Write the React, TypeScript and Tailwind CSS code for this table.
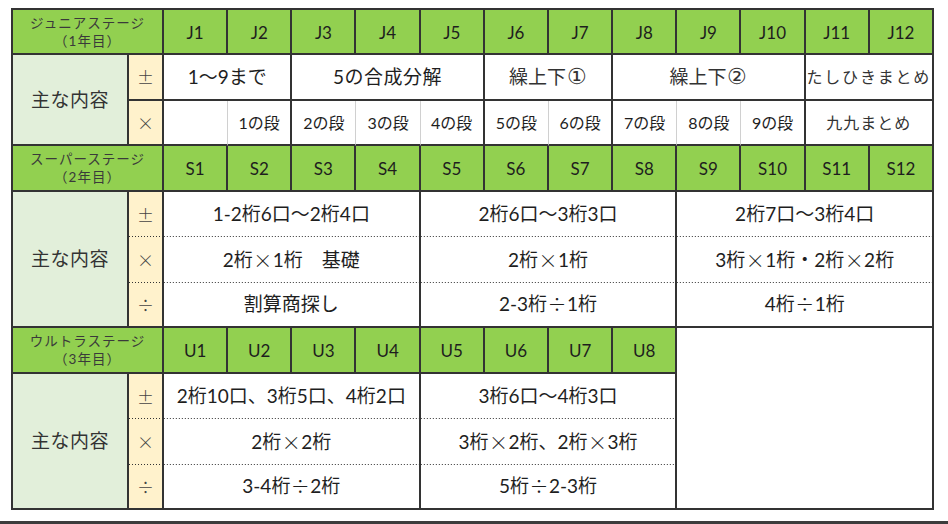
import React from "react";

const DR = "border-r-2 border-r-[#333]";
const LR = "border-r border-r-[#d0d0d0]";
const DB = "border-b-2 border-b-[#333]";
const DOT =
  "bg-[linear-gradient(to_right,#333_1px,transparent_1px)] bg-[length:3px_1px] bg-bottom bg-repeat-x";

function Cell({
  className = "",
  children,
}: {
  className?: string;
  children?: React.ReactNode;
}) {
  return (
    <div
      className={`flex items-center justify-center text-center whitespace-nowrap text-[#1e1e1e] ${className}`}
    >
      {children}
    </div>
  );
}

function Op({ c }: { c: string }) {
  return (
    <span className="inline-block w-[1.05em] text-center font-['Noto_Sans_CJK_JP',sans-serif] font-light">
      {c}
    </span>
  );
}

function Circ({ c }: { c: string }) {
  return <span className="font-['DejaVu_Sans',sans-serif] text-[22px] leading-none font-light ml-[1px]">{c}</span>;
}

function StageHeader({ name, year }: { name: string; year: string }) {
  return (
    <Cell className={`col-span-2 flex-col bg-[#92d050] ${DR} ${DB} text-[13.5px] leading-[18px] tracking-[1px] text-[#3a3a3a]`}>
      <span>{name}</span>
      <span>{year}</span>
    </Cell>
  );
}

function Heads({ prefix, n }: { prefix: string; n: number }) {
  return (
    <>
      {Array.from({ length: n }, (_, i) => (
        <Cell
          key={i}
          className={`bg-[#92d050] ${DR} ${DB} text-[17px] pt-[2px]`}
        >
          {prefix}
          {i + 1}
        </Cell>
      ))}
    </>
  );
}

export default function App() {
  const label = `bg-[#e2efda] ${DR} ${DB} text-[19px] text-[#333] tracking-[0.5px]`;
  const sym = "font-['Noto_Sans_CJK_JP',sans-serif] font-light text-[17px] text-[#444]";
  const symDot = `bg-[#fff2cc] ${DR} ${DOT} ${sym}`;
  const symEnd = `bg-[#fff2cc] ${DR} ${DB} ${sym}`;
  const body = "text-[19px]";
  return (
    <div className="w-[948px] h-[524px] bg-white font-['Lato','Noto_Sans_CJK_JP',sans-serif] flex flex-col">
      <div className="ml-[11px] mt-[8px] w-[923px] h-[502px] grid grid-cols-[116px_35px_repeat(12,minmax(0,1fr))] grid-rows-[repeat(11,minmax(0,1fr))] border-l-2 border-t-2 border-[#333]">
        {/* Junior */}
        <StageHeader name="ジュニアステージ" year="（1年目）" />
        <Heads prefix="J" n={12} />

        <Cell className={`row-span-2 ${label}`}>主な内容</Cell>
        <Cell className={symEnd}>±</Cell>
        <Cell className={`col-span-2 ${DR} ${DB} ${body}`}>1〜9まで</Cell>
        <Cell className={`col-span-3 ${DR} ${DB} ${body} tracking-[0.5px]`}>5の合成分解</Cell>
        <Cell className={`col-span-2 ${DR} ${DB} ${body} text-[#333]`}>
          繰上下<Circ c="①" />
        </Cell>
        <Cell className={`col-span-3 ${DR} ${DB} ${body} text-[#333]`}>
          繰上下<Circ c="②" />
        </Cell>
        <Cell className={`col-span-2 ${DR} ${DB} text-[16px] tracking-[1.8px] text-[#333]`}>たしひきまとめ</Cell>

        <Cell className={symEnd}>×</Cell>
        <Cell className={`${LR} ${DB}`} />
        <Cell className={`${DR} ${DB} text-[16px]`}>1の段</Cell>
        <Cell className={`${LR} ${DB} text-[16px]`}>2の段</Cell>
        <Cell className={`${LR} ${DB} text-[16px]`}>3の段</Cell>
        <Cell className={`${DR} ${DB} text-[16px]`}>4の段</Cell>
        <Cell className={`${LR} ${DB} text-[16px]`}>5の段</Cell>
        <Cell className={`${DR} ${DB} text-[16px]`}>6の段</Cell>
        <Cell className={`${LR} ${DB} text-[16px]`}>7の段</Cell>
        <Cell className={`${LR} ${DB} text-[16px]`}>8の段</Cell>
        <Cell className={`${DR} ${DB} text-[16px]`}>9の段</Cell>
        <Cell className={`col-span-2 ${DR} ${DB} text-[16px] tracking-[1px] text-[#333]`}>九九まとめ</Cell>

        {/* Super */}
        <StageHeader name="スーパーステージ" year="（2年目）" />
        <Heads prefix="S" n={12} />

        <Cell className={`row-span-3 ${label}`}>主な内容</Cell>
        <Cell className={symDot}>±</Cell>
        <Cell className={`col-span-4 ${DR} ${DOT} ${body}`}>1-2桁6口〜2桁4口</Cell>
        <Cell className={`col-span-4 ${DR} ${DOT} ${body}`}>2桁6口〜3桁3口</Cell>
        <Cell className={`col-span-4 ${DR} ${DOT} ${body}`}>2桁7口〜3桁4口</Cell>

        <Cell className={symDot}>×</Cell>
        <Cell className={`col-span-4 ${DR} ${DOT} ${body}`}>
          2桁<Op c="×" />1桁　基礎
        </Cell>
        <Cell className={`col-span-4 ${DR} ${DOT} ${body}`}>
          2桁<Op c="×" />1桁
        </Cell>
        <Cell className={`col-span-4 ${DR} ${DOT} ${body}`}>
          3桁<Op c="×" />1桁・2桁<Op c="×" />2桁
        </Cell>

        <Cell className={symEnd}>÷</Cell>
        <Cell className={`col-span-4 ${DR} ${DB} ${body}`}>割算商探し</Cell>
        <Cell className={`col-span-4 ${DR} ${DB} ${body}`}>
          2-3桁<Op c="÷" />1桁
        </Cell>
        <Cell className={`col-span-4 ${DR} ${DB} ${body}`}>
          4桁<Op c="÷" />1桁
        </Cell>

        {/* Ultra */}
        <StageHeader name="ウルトラステージ" year="（3年目）" />
        <Heads prefix="U" n={8} />
        <div className={`col-span-4 row-span-4 bg-white ${DR} ${DB}`} />

        <Cell className={`row-span-3 ${label}`}>主な内容</Cell>
        <Cell className={symDot}>±</Cell>
        <Cell className={`col-span-4 ${DR} ${DOT} ${body}`}>2桁10口、3桁5口、4桁2口</Cell>
        <Cell className={`col-span-4 ${DR} ${DOT} ${body}`}>3桁6口〜4桁3口</Cell>

        <Cell className={symDot}>×</Cell>
        <Cell className={`col-span-4 ${DR} ${DOT} ${body}`}>
          2桁<Op c="×" />2桁
        </Cell>
        <Cell className={`col-span-4 ${DR} ${DOT} ${body}`}>
          3桁<Op c="×" />2桁、2桁<Op c="×" />3桁
        </Cell>

        <Cell className={symEnd}>÷</Cell>
        <Cell className={`col-span-4 ${DR} ${DB} ${body}`}>
          3-4桁<Op c="÷" />2桁
        </Cell>
        <Cell className={`col-span-4 ${DR} ${DB} ${body}`}>
          5桁<Op c="÷" />2-3桁
        </Cell>
      </div>
      <div className="mt-auto h-[3px] bg-[#3c3c3c]" />
    </div>
  );
}
